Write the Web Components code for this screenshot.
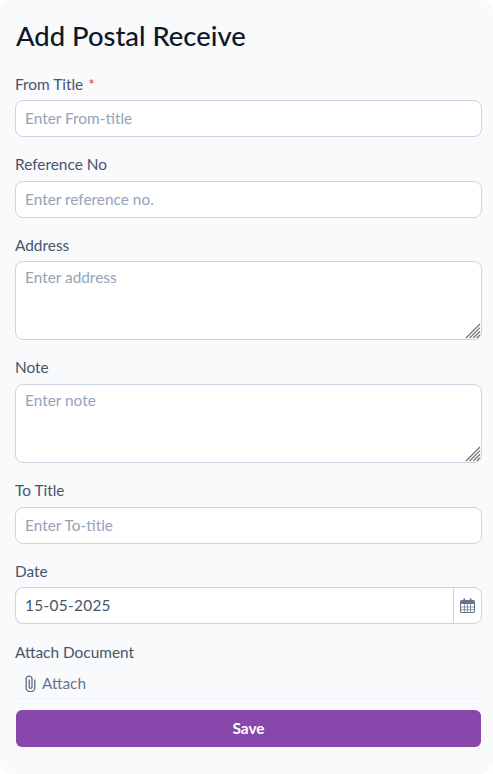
<!DOCTYPE html>
<html>
<head>
<meta charset="utf-8">
<title>Add Postal Receive</title>
<style>
  html, body { margin: 0; padding: 0; background: #fff; }
  body { font-family: "Lato", "Open Sans", sans-serif; }
</style>
</head>
<body>
<postal-card>
  <span slot="title">Add Postal Receive</span>
  <form-field label="From Title" placeholder="Enter From-title" required></form-field>
  <form-field label="Reference No" placeholder="Enter reference no."></form-field>
  <form-field label="Address" placeholder="Enter address" multiline></form-field>
  <form-field label="Note" placeholder="Enter note" multiline></form-field>
  <form-field label="To Title" placeholder="Enter To-title"></form-field>
  <date-field label="Date" value="15-05-2025"></date-field>
  <attach-field label="Attach Document"></attach-field>
  <save-button>Save</save-button>
</postal-card>

<script>
const fieldStyles = `
  :host { display: block; }
  label {
    display: block;
    height: 20px;
    line-height: 20px;
    margin-bottom: 6.6px;
    font-size: 15.4px;
    color: #475569;
  }
  .req { color: #ef2b4d; margin-left: 1px; }
  input, textarea {
    display: block;
    box-sizing: border-box;
    width: 100%;
    margin: 0;
    padding: 0 9px;
    border: 1px solid #cbd5e1;
    border-radius: 8px;
    background: #fff;
    font: inherit;
    font-size: 15.4px;
    color: #475569;
    outline: none;
  }
  input { height: 37px; padding-bottom: 1px; }
  textarea { height: 79px; padding-top: 6px; resize: none; }
  ::placeholder { color: #94a3b8; opacity: 1; }
  .wrap { position: relative; }
  .grip { position: absolute; right: 1px; bottom: 1px; }
`

class PostalCard extends HTMLElement {
  constructor() {
    super()
    this.attachShadow({ mode: "open" })
    this.shadowRoot.innerHTML = `
      <style>
        :host {
          display: block;
          box-sizing: border-box;
          height: 774px;
          padding: 20px 11px 0 15px;
          background: #f8fafc;
          border-radius: 12px;
          overflow: hidden;
        }
        h1 {
          margin: 0 0 21.6px 1px;
          height: 32px;
          line-height: 32px;
          font-size: 27.4px;
          font-weight: 500;
          color: #0f172a;
        }
        .fields { display: flex; flex-direction: column; gap: 17px; }
      </style>
      <h1><slot name="title"></slot></h1>
      <div class="fields"><slot></slot></div>
    `
  }
}
customElements.define("postal-card", PostalCard)

class FormField extends HTMLElement {
  constructor() {
    super()
    this.attachShadow({ mode: "open" })
  }
  connectedCallback() {
    const label = this.getAttribute("label")
    const placeholder = this.getAttribute("placeholder")
    const req = this.hasAttribute("required") ? ' <span class="req">*</span>' : ""
    const control = this.hasAttribute("multiline")
      ? `<div class="wrap"><textarea id="f" placeholder="${placeholder}"></textarea>
          <svg class="grip" width="16" height="16" viewBox="0 0 16 16" stroke="#777" stroke-width="1.3">
            <path d="M1 15 15 1M4.6 15 15 4.6M8.2 15 15 8.2M11.8 15l3.2-3.2"/>
          </svg></div>`
      : `<input id="f" type="text" placeholder="${placeholder}">`
    this.shadowRoot.innerHTML = `
      <style>${fieldStyles}</style>
      <label for="f">${label}${req}</label>
      ${control}
    `
  }
}
customElements.define("form-field", FormField)

class DateField extends HTMLElement {
  constructor() {
    super()
    this.attachShadow({ mode: "open" })
  }
  connectedCallback() {
    this.shadowRoot.innerHTML = `
      <style>
        ${fieldStyles}
        .group { display: flex; height: 37px; }
        input { flex: 1; min-width: 0; border-radius: 8px 0 0 8px; border-right: 0; letter-spacing: .3px; }
        .addon {
          display: flex;
          align-items: center;
          justify-content: center;
          box-sizing: border-box;
          width: 29px;
          background: #fff;
          border: 1px solid #cbd5e1;
          border-radius: 0 8px 8px 0;
        }
      </style>
      <label for="f">${this.getAttribute("label")}</label>
      <div class="group">
        <input id="f" type="text" value="${this.getAttribute("value")}">
        <span class="addon">
          <svg width="15" height="15" viewBox="0 0 14 15" preserveAspectRatio="none">
            <path d="M1.5 2.5h11a1 1 0 0 1 1 1v10a1 1 0 0 1-1 1h-11a1 1 0 0 1-1-1v-10a1 1 0 0 1 1-1z" fill="#fff" stroke="#64748b"/>
            <path d="M1 3h12v3H1z" fill="#64748b"/>
            <path d="M4 1v3M10 1v3" stroke="#64748b" stroke-width="1.6" stroke-linecap="round"/>
            <path d="M1 9h12M1 11.7h12M4.2 6v8M7 6v8M9.8 6v8" stroke="#64748b" stroke-width=".7"/>
          </svg>
        </span>
      </div>
    `
  }
}
customElements.define("date-field", DateField)

class AttachField extends HTMLElement {
  constructor() {
    super()
    this.attachShadow({ mode: "open" })
  }
  connectedCallback() {
    this.shadowRoot.innerHTML = `
      <style>
        ${fieldStyles}
        :host { margin-top: .6px; }
        label { margin-bottom: 7px; }
        .row {
          display: flex;
          align-items: center;
          gap: 6px;
          height: 29px;
          padding-left: 10px;
          border-bottom: 1px solid #f1f5f9;
          font-size: 15.4px;
          color: #64748b;
        }
      </style>
      <label>${this.getAttribute("label")}</label>
      <div class="row">
        <svg width="11" height="17" viewBox="0 0 11 17" fill="none" stroke="#64748b" stroke-width="1.4" stroke-linecap="round">
          <path d="M9.8 5v7.5a4.3 4.3 0 0 1-8.6 0V4a2.9 2.9 0 0 1 5.8 0v8a1.4 1.4 0 0 1-2.8 0V5"/>
        </svg>
        <span>Attach</span>
      </div>
    `
  }
}
customElements.define("attach-field", AttachField)

class SaveButton extends HTMLElement {
  constructor() {
    super()
    this.attachShadow({ mode: "open" })
    this.shadowRoot.innerHTML = `
      <style>
        :host { display: block; margin: -6px 1px 0 1px; }
        button {
          display: block;
          width: 100%;
          height: 37px;
          border: 0;
          border-radius: 6px;
          background: #8847ab;
          color: #fff;
          font: inherit;
          font-size: 15.4px;
          font-weight: 700;
        }
      </style>
      <button type="button"><slot></slot></button>
    `
  }
}
customElements.define("save-button", SaveButton)
</script>
</body>
</html>
